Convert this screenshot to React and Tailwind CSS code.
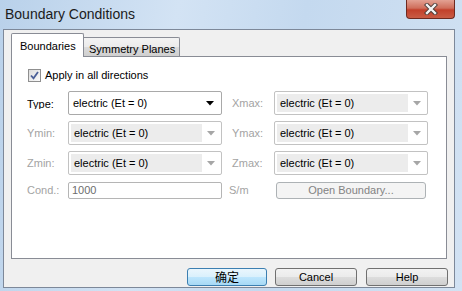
import React from 'react';

const font = { fontFamily: '"Liberation Sans", Arial, sans-serif' };

const Arrow = ({ disabled }) => (
  <svg width="8" height="5" viewBox="0 0 8 5" className="shrink-0">
    <path d="M0 0 L8 0 L4 4.5 Z" fill={disabled ? '#a6a6a6' : '#000'} />
  </svg>
);

const Combo = ({ disabled }) =>
  disabled ? (
    <div className="w-[154px] h-[24px] border border-[#c2c2c2] rounded-[2px] bg-white flex items-center pl-[2px] pr-[6px]">
      <div className="h-[18px] w-[131px] bg-[#ececec] flex items-center pl-[3px] text-black">electric (Et = 0)</div>
      <div className="flex-1 flex justify-end">
        <Arrow disabled />
      </div>
    </div>
  ) : (
    <div className="w-[154px] h-[24px] border border-[#a9a9a9] rounded-[2px] bg-white flex items-center pl-[4px] pr-[7px] justify-between">
      <span className="text-black">electric (Et = 0)</span>
      <Arrow />
    </div>
  );

const Label = ({ children, disabled, w }) => (
  <div className={`${w} shrink-0 ${disabled ? 'text-[#a3a3a3]' : 'text-black'}`}>{children}</div>
);

const Row = ({ left, leftDisabled, right }) => (
  <div className="flex items-center h-[24px]">
    <Label w="w-[41px]" disabled={leftDisabled}>
      {left === 'Type:' ? (
        // descenders are cut off in the original dialog
        <span className="block h-[10px] overflow-hidden leading-[11px] mt-[1px]">Type:</span>
      ) : (
        left
      )}
    </Label>
    <Combo disabled={leftDisabled} />
    <div className="w-[10px]" />
    <Label w="w-[42px]" disabled>
      {right}
    </Label>
    <Combo disabled />
  </div>
);

const Button = ({ children, w, primary }) => (
  <div
    className={`${w} h-[18px] rounded-[3px] border flex items-center justify-center text-black ${
      primary
        ? 'border-[#3c7fb1] bg-[linear-gradient(#eaf6fd,#d9f0fc_50%,#bee6fd_50%,#a7d9f5)]'
        : 'border-[#707070] bg-[linear-gradient(#f2f2f2,#ebebeb_50%,#dddddd_50%,#cfcfcf)]'
    }`}
  >
    {children}
  </div>
);

export default function App() {
  return (
    <div
      className="w-[462px] h-[291px] flex flex-col overflow-hidden text-[11px] bg-[linear-gradient(100deg,#b9d1ea,#d3e3f4_35%,#c4d9ef_60%,#d2e2f3)]"
      style={font}
    >
      <div className="h-[29px] flex justify-between items-start pl-[5px] pr-[7px] shrink-0">
        <div className="pt-[6px] text-[14px] text-[#1b1b1b] leading-[16px]">Boundary Conditions</div>
        <div className="w-[49px] h-[19px] rounded-b-[4px] border border-t-0 border-[#6e2a20] bg-[linear-gradient(#e3a193,#cf6e5b_45%,#c2402b_55%,#c95c45)] flex items-center justify-center">
          <svg width="16" height="12" viewBox="0 0 16 12">
            <path d="M4 2 L12 10 M12 2 L4 10" stroke="#4a3a36" strokeWidth="4.2" strokeLinecap="square" />
            <path d="M4 2 L12 10 M12 2 L4 10" stroke="#f4f4f4" strokeWidth="2.4" strokeLinecap="square" />
          </svg>
        </div>
      </div>

      <div className="ml-[3px] mr-[7px] mb-[3px] flex-1 border border-[#7d8899] bg-[#f0f0f0] pl-[7px] pt-[3px] flex flex-col">
        <div className="h-[23px] flex items-end relative z-10">
          <div className="w-[73px] h-[24px] -mb-px bg-white border border-b-0 border-[#898c95] rounded-t-[2px] pl-[8px] pt-[4px] text-black">
            Boundaries
          </div>
          <div className="w-[96px] h-[19px] border border-l-0 border-b-0 border-[#898c95] rounded-tr-[2px] bg-[linear-gradient(#f3f3f3,#ebebeb_50%,#dcdcdc_50%,#cfcfcf)] pl-[5px] pt-[3px] text-black">
            Symmetry Planes
          </div>
        </div>
        <div className="w-[436px] h-[203px] border border-[#898c95] bg-white pl-[15px] pt-[12px] flex flex-col">
          <div className="flex items-center h-[13px] ml-[1px]">
            <div className="w-[13px] h-[13px] border border-[#8f8f8f] bg-[linear-gradient(135deg,#dcdcdc,#fbfbfb)] flex items-center justify-center">
              <svg width="9" height="9" viewBox="0 0 9 9">
                <path d="M1 4.5 L3.5 7.3 L8 1" stroke="#4a5f97" strokeWidth="1.8" fill="none" />
              </svg>
            </div>
            <span className="ml-[4px] text-black">Apply in all directions</span>
          </div>
          <div className="mt-[9px] flex flex-col gap-[6px]">
            <Row left="Type:" right="Xmax:" />
            <Row left="Ymin:" leftDisabled right="Ymax:" />
            <Row left="Zmin:" leftDisabled right="Zmax:" />
          </div>
          <div className="mt-[7px] flex items-center h-[17px]">
            <Label w="w-[41px]" disabled>
              Cond.:
            </Label>
            <div className="w-[154px] h-[17px] border border-[#b5b5b5] rounded-[2px] bg-white pl-[3px] flex items-center text-[#6d6d6d]">
              1000
            </div>
            <span className="ml-[7px] w-[47px] text-[#a3a3a3]">S/m</span>
            <div className="w-[150px] h-[17px] border border-[#adb2b5] rounded-[3px] bg-[#f4f4f4] flex items-center justify-center text-[#838383]">
              Open Boundary...
            </div>
          </div>
        </div>
        <div className="mt-[9px] flex justify-end pr-[6px]">
          <Button w="w-[80px]" primary>
            <span style={{ fontFamily: '"Noto Sans CJK SC", sans-serif' }} className="text-[12px] leading-[14px]">
              确定
            </span>
          </Button>
          <div className="w-[8px]" />
          <Button w="w-[82px]">Cancel</Button>
          <div className="w-[9px]" />
          <Button w="w-[82px]">Help</Button>
        </div>
      </div>
    </div>
  );
}
